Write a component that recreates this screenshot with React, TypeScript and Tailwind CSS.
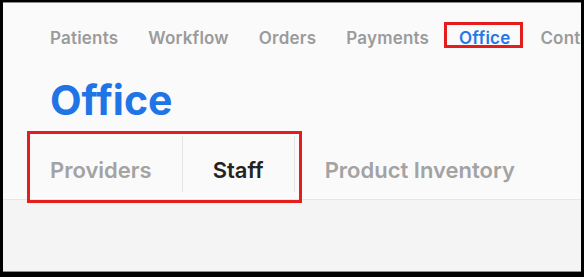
import React from 'react';

const navItems = ['Patients', 'Workflow', 'Orders', 'Payments', 'Office', 'Contacts'];
const tabs = ['Providers', 'Staff', 'Product Inventory'];

export default function App() {
    return (
        <div className="w-[584px] h-[277px] overflow-hidden border-t-2 border-l-[3px] border-r-[3px] border-b-[5px] border-black bg-white">
            <div
                className="relative w-full h-full flex flex-col border-t border-b border-[#8c8c8c] overflow-hidden"
                style={{ fontFamily: 'Inter, "Noto Sans", sans-serif' }}
            >
                {/* Header */}
                <div className="bg-[#fafafa] pl-[47px] pt-[24px] border-b border-[#e6e6e6]">
                    <nav className="flex gap-[30px] whitespace-nowrap text-[17px] leading-[22px] font-semibold tracking-[0.2px] text-[#9b9b9b]">
                        {navItems.map(item => (
                            <span key={item} className={item === 'Office' ? 'text-[#2477e6]' : ''}>
                                {item}
                            </span>
                        ))}
                    </nav>

                    <h1 className="mt-[27px] text-[41px] leading-[48px] font-bold text-[#1f74e6]">
                        Office
                    </h1>

                    <div className="mt-[12px] flex items-start text-[22px] leading-7 font-semibold whitespace-nowrap">
                        {tabs.map((tab, i) => (
                            <React.Fragment key={tab}>
                                {i > 0 && <div className="w-px h-[56px] bg-[#e4e4e4]" />}
                                <div
                                    className={`h-[63px] flex items-center pt-[4px] ${i === 0 ? 'pr-[30px]' : 'px-[30px]'} ${tab === 'Staff' ? 'text-[#232323]' : 'text-[#a3a3a3]'}`}
                                >
                                    {tab}
                                </div>
                            </React.Fragment>
                        ))}
                    </div>
                </div>

                {/* Content */}
                <div className="flex-1 bg-[#f4f4f4]" />

                {/* Annotations */}
                <div className="absolute left-[441px] top-[19px] w-[79px] h-[26px] border-[3px] border-[#e41d1d]" />
                <div className="absolute left-[24px] top-[128px] w-[275px] h-[72px] border-[3px] border-[#e41d1d]" />
            </div>
        </div>
    );
}
